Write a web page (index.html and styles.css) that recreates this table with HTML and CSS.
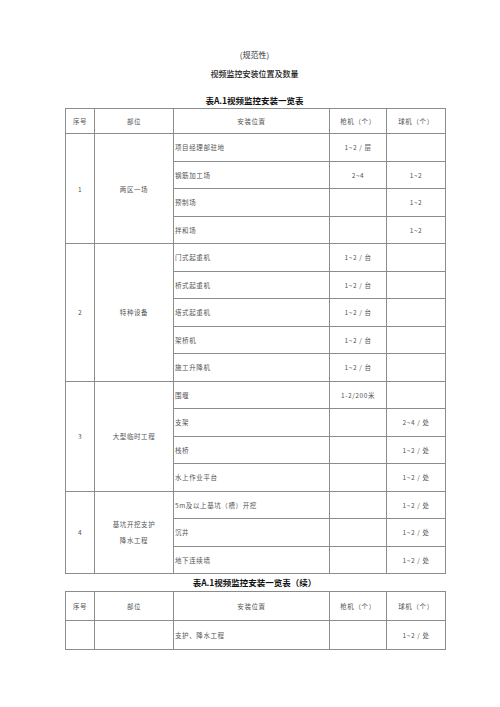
FILE: index.html
```html
<!DOCTYPE html>
<html lang="zh">
<head>
<meta charset="utf-8">
<link rel="stylesheet" href="styles.css">
</head>
<body>
<div class="page">
  <div class="title-sub">(规范性)</div>
  <div class="title-main">视频监控安装位置及数量</div>
  <div class="caption cap1">表A.1视频监控安装一览表</div>
  <table class="grid">
    <colgroup>
      <col class="c1"><col class="c2"><col class="c3"><col class="c4"><col class="c5">
    </colgroup>
    <thead>
      <tr class="head"><th>序号</th><th>部位</th><th>安装位置</th><th>枪机（个）</th><th>球机（个）</th></tr>
    </thead>
    <tbody>
      <tr><td rowspan="4" class="ctr">1</td><td rowspan="4" class="ctr">两区一场</td><td class="loc">项目经理部驻地</td><td class="ctr">1~2 / 层</td><td class="ctr"></td></tr>
      <tr><td class="loc">钢筋加工场</td><td class="ctr">2~4</td><td class="ctr">1~2</td></tr>
      <tr><td class="loc">预制场</td><td class="ctr"></td><td class="ctr">1~2</td></tr>
      <tr><td class="loc">拌和场</td><td class="ctr"></td><td class="ctr">1~2</td></tr>

      <tr><td rowspan="5" class="ctr">2</td><td rowspan="5" class="ctr">特种设备</td><td class="loc">门式起重机</td><td class="ctr">1~2 / 台</td><td class="ctr"></td></tr>
      <tr><td class="loc">桥式起重机</td><td class="ctr">1~2 / 台</td><td class="ctr"></td></tr>
      <tr><td class="loc">塔式起重机</td><td class="ctr">1~2 / 台</td><td class="ctr"></td></tr>
      <tr><td class="loc">架桥机</td><td class="ctr">1~2 / 台</td><td class="ctr"></td></tr>
      <tr><td class="loc">施工升降机</td><td class="ctr">1~2 / 台</td><td class="ctr"></td></tr>

      <tr><td rowspan="4" class="ctr">3</td><td rowspan="4" class="ctr">大型临时工程</td><td class="loc">围堰</td><td class="ctr">1-2/200米</td><td class="ctr"></td></tr>
      <tr><td class="loc">支架</td><td class="ctr"></td><td class="ctr">2~4 / 处</td></tr>
      <tr><td class="loc">栈桥</td><td class="ctr"></td><td class="ctr">1~2 / 处</td></tr>
      <tr><td class="loc">水上作业平台</td><td class="ctr"></td><td class="ctr">1~2 / 处</td></tr>

      <tr><td rowspan="3" class="ctr">4</td><td rowspan="3" class="ctr two">基坑开挖支护<br>降水工程</td><td class="loc">5m及以上基坑（槽）开挖</td><td class="ctr"></td><td class="ctr">1~2 / 处</td></tr>
      <tr><td class="loc">沉井</td><td class="ctr"></td><td class="ctr">1~2 / 处</td></tr>
      <tr><td class="loc">地下连续墙</td><td class="ctr"></td><td class="ctr">1~2 / 处</td></tr>
    </tbody>
  </table>

  <div class="caption cap2">表A.1视频监控安装一览表（续）</div>
  <table class="grid grid2">
    <colgroup>
      <col class="c1"><col class="c2"><col class="c3"><col class="c4"><col class="c5">
    </colgroup>
    <thead>
      <tr class="head2"><th>序号</th><th>部位</th><th>安装位置</th><th>枪机（个）</th><th>球机（个）</th></tr>
    </thead>
    <tbody>
      <tr class="row2"><td class="ctr"></td><td class="ctr"></td><td class="loc">支护、降水工程</td><td class="ctr"></td><td class="ctr">1~2 / 处</td></tr>
    </tbody>
  </table>
</div>
</body>
</html>
```

FILE: styles.css
```css
html, body {
  margin: 0;
  padding: 0;
  background: #ffffff;
}

.page {
  width: 500px;
  height: 707px;
  padding: 49px 0 0 65px;
  box-sizing: border-box;
  font-family: "Noto Sans CJK SC", "Noto Sans", sans-serif;
  color: #222;
}

.title-sub,
.title-main,
.caption {
  width: 379px;
  text-align: center;
  line-height: 12px;
  height: 12px;
}

.title-sub {
  font-size: 8px;
  color: #333;
}

.title-main {
  margin-top: 7px;
  font-size: 8px;
  color: #222;
  font-weight: 500;
}

.cap1 {
  margin-top: 14px;
  margin-bottom: 2px;
}

.caption {
  font-size: 8.5px;
  font-weight: 700;
  color: #111;
}

.cap2 {
  margin-top: 2px;
  margin-bottom: 3px;
}

.grid {
  border-collapse: collapse;
  table-layout: fixed;
  width: 380px;
  font-size: 6.5px;
  color: #555;
  letter-spacing: 0.6px;
}

.grid th,
.grid td {
  border: 1px solid #8c8c8c;
  padding: 0;
  height: 26.5px;
  font-weight: 400;
  vertical-align: middle;
  white-space: nowrap;
  overflow: hidden;
}

.grid .head th {
  height: 24px;
  text-align: center;
}

.c1 { width: 29px; }
.c2 { width: 79px; }
.c3 { width: 156px; }
.c4 { width: 57px; }
.c5 { width: 59px; }

.ctr {
  text-align: center;
}

.loc {
  text-align: left;
  padding-left: 1px !important;
}

.two {
  line-height: 16px;
}

.grid2 .head2 th {
  height: 28px;
  text-align: center;
}

.grid2 .row2 td {
  height: 28px;
}
```
